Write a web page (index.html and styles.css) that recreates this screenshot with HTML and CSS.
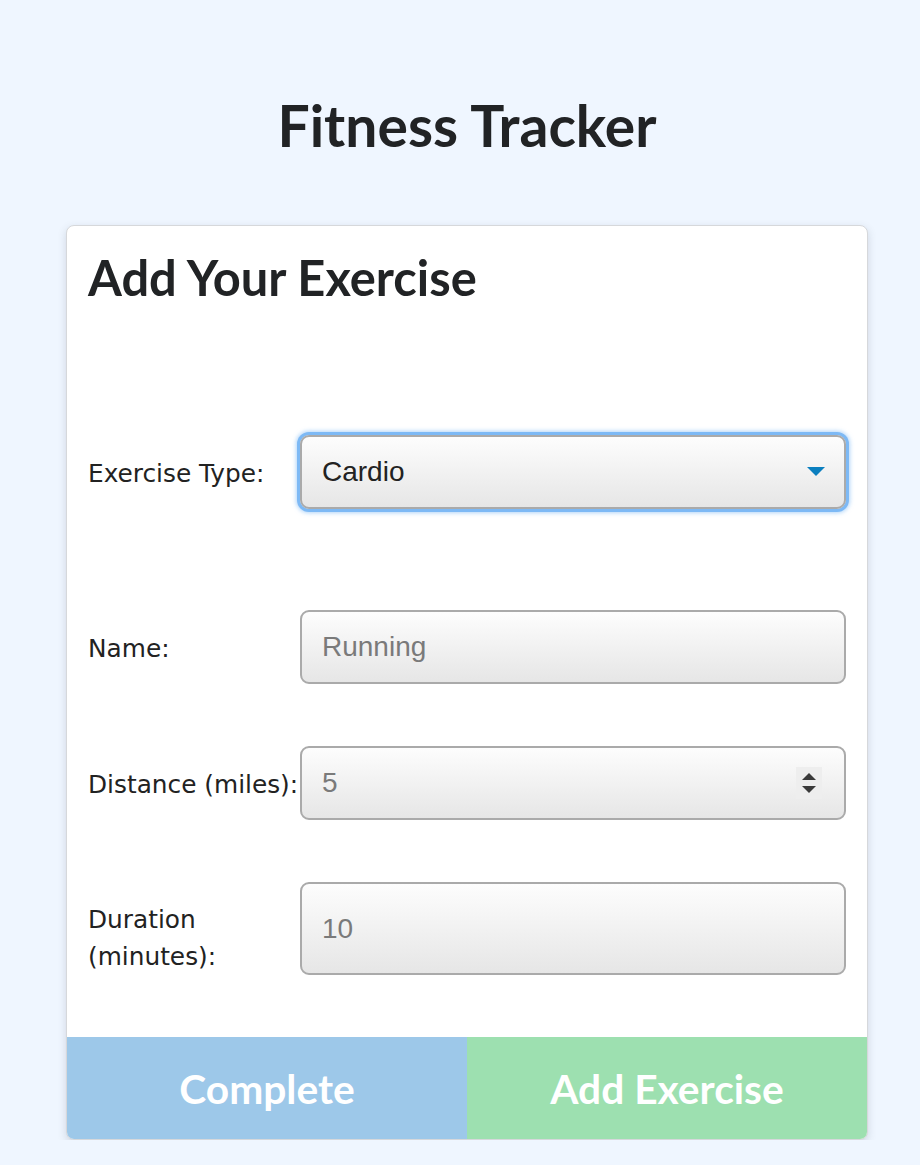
FILE: index.html
```html
<!DOCTYPE html>
<html>
<head>
<meta charset="utf-8">
<title>Fitness Tracker</title>
<link rel="stylesheet" href="styles.css">
</head>
<body>
<main class="page">
  <h1 class="title">Fitness Tracker</h1>
  <section class="card">
    <h2 class="card-title">Add Your Exercise</h2>
    <form class="form">
      <div class="row row-type">
        <label class="label">Exercise Type:</label>
        <div class="field select focused">
          <span class="value">Cardio</span>
          <svg class="caret" width="20" height="12" viewBox="0 0 20 12"><path d="M1 1 L19 1 L10 10 Z" fill="#0b7fbf"/></svg>
        </div>
      </div>
      <div class="row">
        <label class="label">Name:</label>
        <div class="field"><span class="placeholder">Running</span></div>
      </div>
      <div class="row">
        <label class="label">Distance (miles):</label>
        <div class="field">
          <span class="placeholder">5</span>
          <span class="spinner">
            <svg width="16" height="26" viewBox="0 0 16 26"><path d="M1 10 L8 3 L15 10 Z" fill="#3a3a3a"/><path d="M1 16 L15 16 L8 23 Z" fill="#3a3a3a"/></svg>
          </span>
        </div>
      </div>
      <div class="row">
        <label class="label label-multi">Duration<br>(minutes):</label>
        <div class="field"><span class="placeholder">10</span></div>
      </div>
    </form>
    <div class="actions">
      <button class="btn btn-complete" type="button">Complete</button>
      <button class="btn btn-add" type="button">Add Exercise</button>
    </div>
  </section>
</main>
</body>
</html>
```
FILE: styles.css
```css
* { box-sizing: border-box; }
html, body { margin: 0; padding: 0; }
body {
  background: #eff6ff;
  font-family: "DejaVu Sans", Verdana, sans-serif;
  color: #222;
}
.page {
  display: flex;
  flex-direction: column;
  align-items: center;
  padding-top: 90px;
  padding-left: 14px;
}
.title {
  margin: 0;
  font-family: Lato, sans-serif;
  font-weight: 700;
  font-size: 57px;
  line-height: 70px;
  color: #212325;
}
.card {
  margin-top: 65px;
  width: 802px;
  background: #fff;
  border: 1px solid #d6d8db;
  border-radius: 8px;
  box-shadow: 0 3px 8px rgba(60, 70, 90, 0.18);
  overflow: hidden;
}
.card-title {
  margin: 0;
  padding: 22px 21px 0;
  font-family: Lato, sans-serif;
  font-weight: 700;
  font-size: 48.8px;
  line-height: 58px;
  color: #212325;
}
.form {
  display: flex;
  flex-direction: column;
  gap: 62px;
  padding: 129px 21px 62px 21px;
}
.row {
  display: grid;
  grid-template-columns: 212px 546px;
  align-items: stretch;
}
.row-type { margin-bottom: 39px; }
.label {
  display: flex;
  align-items: center;
  font-size: 24.8px;
  line-height: 36px;
  padding-top: 3px;
  color: #222;
}
.label-multi {
  align-items: flex-start;
  padding-top: 19px;
  line-height: 37px;
}
.field {
  display: flex;
  align-items: center;
  justify-content: space-between;
  min-height: 74px;
  padding: 0 18px 0 20px;
  border: 2px solid #aaaaaa;
  border-radius: 9px;
  background: linear-gradient(#fdfdfd, #e6e6e6);
  font-family: "Liberation Sans", Arial, sans-serif;
  font-size: 28px;
}
.select.focused {
  box-shadow: 0 0 0 3px #7db9f5, 0 0 4px 4px rgba(125, 185, 245, 0.6);
}
.value { color: #222; }
.placeholder { color: #7a7a7a; }
.spinner {
  display: flex;
  align-items: center;
  justify-content: center;
  width: 26px;
  height: 32px;
  background: #eeeeee;
  margin-right: 4px;
}
.actions {
  display: grid;
  grid-template-columns: 1fr 1fr;
}
.btn {
  height: 102px;
  border: 0;
  font-family: Lato, sans-serif;
  font-weight: 700;
  font-size: 40.7px;
  color: #fff;
  cursor: pointer;
}
.btn-complete { background: #9dc8e9; }
.btn-add { background: #9de0b0; }
```
